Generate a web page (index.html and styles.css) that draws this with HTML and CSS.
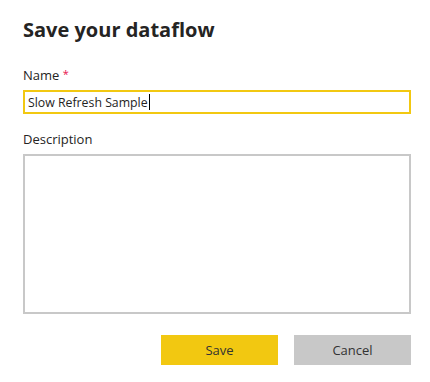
FILE: index.html
```html
<!DOCTYPE html>
<html>
<head>
<meta charset="utf-8">
<link rel="stylesheet" href="styles.css">
</head>
<body>
<div class="dialog">
  <h1 class="title">Save your dataflow</h1>
  <div class="field">
    <label class="label">Name <span class="req">*</span></label>
    <div class="input"><span class="value">Slow Refresh Sample</span><span class="caret"></span></div>
  </div>
  <div class="field">
    <label class="label">Description</label>
    <div class="textarea"></div>
  </div>
  <div class="actions">
    <button class="btn btn-primary">Save</button>
    <button class="btn btn-secondary">Cancel</button>
  </div>
</div>
</body>
</html>
```
FILE: styles.css
```css
html, body {
  margin: 0;
  padding: 0;
  background: #ffffff;
}
.dialog {
  width: 388px;
  padding: 16px 19px 0 23px;
  font-family: "Open Sans", "Noto Sans", sans-serif;
  color: #252423;
}
.title {
  margin: 0;
  font-size: 20px;
  font-weight: 700;
  line-height: 28px;
  color: #252423;
}
.field {
  display: flex;
  flex-direction: column;
}
.field:first-of-type {
  margin-top: 20px;
}
.label {
  font-size: 13px;
  line-height: 20px;
  color: #252423;
  margin-bottom: 5px;
}
.req {
  color: #e8114f;
  font-size: 11px;
  vertical-align: 2px;
}
.input {
  box-sizing: border-box;
  height: 24px;
  border: 2px solid #f2c811;
  display: flex;
  align-items: center;
  padding-left: 3px;
  font-size: 12.3px;
  color: #252423;
}
.caret {
  width: 1px;
  height: 16px;
  background: #000;
  margin-left: 1px;
}
.field + .field {
  margin-top: 15px;
}
.textarea {
  box-sizing: border-box;
  height: 160px;
  border: 2px solid #c8c8c8;
}
.actions {
  display: flex;
  justify-content: flex-end;
  gap: 16px;
  margin-top: 21px;
}
.btn {
  width: 117px;
  height: 30px;
  border: none;
  font-family: "Open Sans", "Noto Sans", sans-serif;
  font-size: 13px;
  color: #333333;
  padding: 0;
}
.btn-primary {
  background: #f2c811;
}
.btn-secondary {
  background: #c8c8c8;
}
```
